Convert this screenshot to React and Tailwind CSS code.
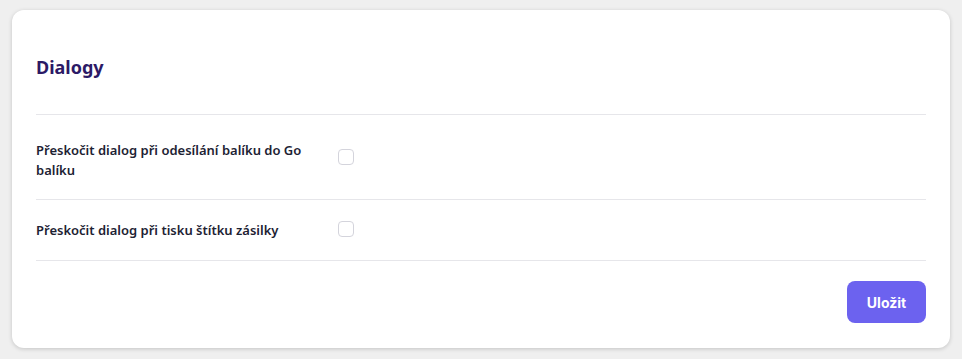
import React from "react";

const rows = [
    { label: "Přeskočit dialog při odesílání balíku do Go balíku", pad: "pt-[25px] pb-[19px]", box: "mt-[9px]" },
    { label: "Přeskočit dialog při tisku štítku zásilky", pad: "pt-[20px] pb-[20px]", box: "mt-[1px]" },
];

function Checkbox({ className }) {
    return (
        <input
            type="checkbox"
            className={`appearance-none w-4 h-4 shrink-0 rounded-[4px] border border-[#d4d4dc] bg-white ${className}`}
        />
    );
}

export default function App() {
    return (
        <div
            className="min-h-screen bg-[#efefef] px-3 pt-[10px] pb-[11px]"
            style={{ fontFamily: '"Noto Sans", "Open Sans", sans-serif' }}
        >
            <div className="bg-white rounded-xl shadow-[0_1px_4px_rgba(0,0,0,0.18)] px-6">
                <div className="pt-[43px] pb-[33px] border-b border-[#e6e6ea]">
                    <h2 className="text-[18px] leading-7 font-bold text-[#2c1a66]">Dialogy</h2>
                </div>

                {rows.map((r) => (
                    <div key={r.label} className={`flex items-start border-b border-[#e6e6ea] ${r.pad}`}>
                        <div className="w-[290px] text-[13px] leading-5 font-semibold text-[#1d2233]">
                            {r.label}
                        </div>
                        <Checkbox className={`ml-3 ${r.box}`} />
                    </div>
                ))}

                <div className="flex justify-end pt-[20px] pb-[25px]">
                    <button
                        className="h-[42px] w-[79px] rounded-lg bg-[#6c62ef] text-white text-[14px] font-bold"
                        style={{ fontFamily: 'Inter, "Noto Sans", sans-serif' }}
                    >
                        Uložit
                    </button>
                </div>
            </div>
        </div>
    );
}
